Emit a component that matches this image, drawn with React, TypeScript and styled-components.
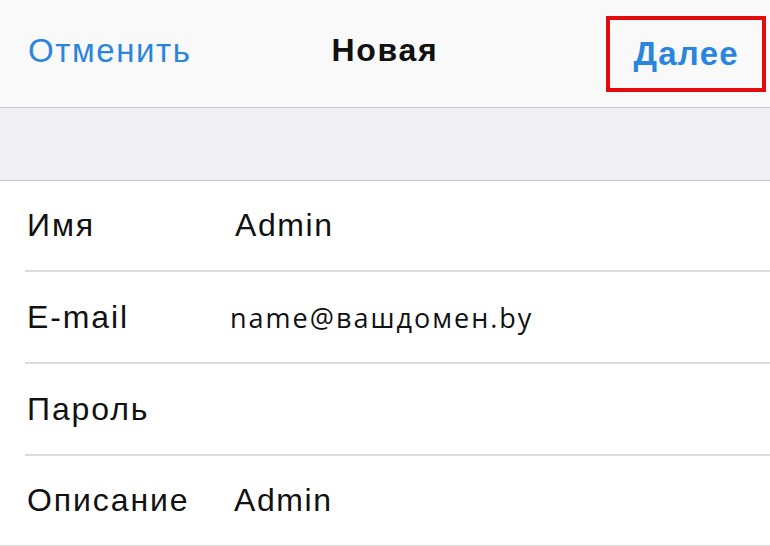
import styled, { createGlobalStyle } from 'styled-components';

const GlobalStyle = createGlobalStyle`
  html, body {
    margin: 0;
    padding: 0;
    background: #ffffff;
  }
  body {
    font-family: "Liberation Sans", Arial, sans-serif;
    -webkit-font-smoothing: antialiased;
  }
`;

const Screen = styled.div`
  width: 770px;
  height: 546px;
  overflow: hidden;
  display: flex;
  flex-direction: column;
  background: #ffffff;
`;

const NavBar = styled.header`
  height: 108px;
  flex-shrink: 0;
  display: grid;
  grid-template-columns: 1fr auto 1fr;
  align-items: center;
  padding: 0 4px 6px;
  box-sizing: border-box;
  background: #f9f9f9;
  border-bottom: 1px solid #c4c4c6;
`;

const NavButton = styled.button<{ $bold?: boolean; $align: 'start' | 'end' }>`
  justify-self: ${(p) => p.$align};
  border: none;
  background: none;
  padding: 0 0 0 ${(p) => (p.$align === 'start' ? 24 : 0)}px;
  font-family: inherit;
  font-size: 33px;
  font-weight: ${(p) => (p.$bold ? 700 : 400)};
  letter-spacing: ${(p) => (p.$bold ? '1.3px' : '1.6px')};
  color: #2a86dc;
  cursor: pointer;
`;

// red annotation frame drawn around the "Далее" button
const Highlight = styled.span`
  display: inline-flex;
  align-items: center;
  height: 76px;
  margin-top: 6px;
  padding: 0 23px;
  box-sizing: border-box;
  border: 4px solid #e20a0a;
`;

const Title = styled.h1`
  margin: 0;
  font-size: 32px;
  font-weight: 700;
  color: #111111;
  letter-spacing: 1.7px;
`;

const Spacer = styled.div`
  height: 72px;
  flex-shrink: 0;
  background: #f0f0f4;
  border-bottom: 1px solid #c8c8cc;
`;

const Form = styled.div`
  display: flex;
  flex-direction: column;
`;

const Row = styled.div<{ $last?: boolean; $h: number }>`
  height: ${(p) => p.$h}px;
  flex-shrink: 0;
  display: grid;
  grid-template-columns: 206px 1fr;
  align-items: center;
  margin-left: ${(p) => (p.$last ? 0 : 25)}px;
  padding-left: ${(p) => (p.$last ? 27 : 2)}px;
  border-bottom: 2px solid #dcdcdc;
  box-sizing: border-box;
`;

const Label = styled.span`
  font-size: 32px;
  color: #111111;
  letter-spacing: 1.9px;
`;

const Value = styled.span<{ $mono?: boolean; $shift?: number }>`
  font-family: ${(p) => (p.$mono ? '"Open Sans", "Noto Sans", sans-serif' : 'inherit')};
  font-size: ${(p) => (p.$mono ? 27 : 32)}px;
  color: #111111;
  letter-spacing: ${(p) => (p.$mono ? '2px' : '1.6px')};
  margin-left: ${(p) => p.$shift ?? 0}px;
`;

const fields = [
  { label: 'Имя', value: 'Admin', shift: 2, h: 91 },
  { label: 'E-mail', value: 'name@вашдомен.by', mono: true, shift: -3, h: 92 },
  { label: 'Пароль', value: '', h: 92 },
  { label: 'Описание', value: 'Admin', shift: 1, h: 91 },
];

export default function App() {
  return (
    <>
      <GlobalStyle />
      <Screen>
        <NavBar>
          <NavButton $align="start">Отменить</NavButton>
          <Title>Новая</Title>
          <NavButton $align="end" $bold>
            <Highlight>Далее</Highlight>
          </NavButton>
        </NavBar>
        <Spacer />
        <Form>
          {fields.map((f, i) => (
            <Row key={f.label} $h={f.h} $last={i === fields.length - 1}>
              <Label>{f.label}</Label>
              <Value $mono={f.mono} $shift={f.shift}>
                {f.value}
              </Value>
            </Row>
          ))}
        </Form>
      </Screen>
    </>
  );
}
